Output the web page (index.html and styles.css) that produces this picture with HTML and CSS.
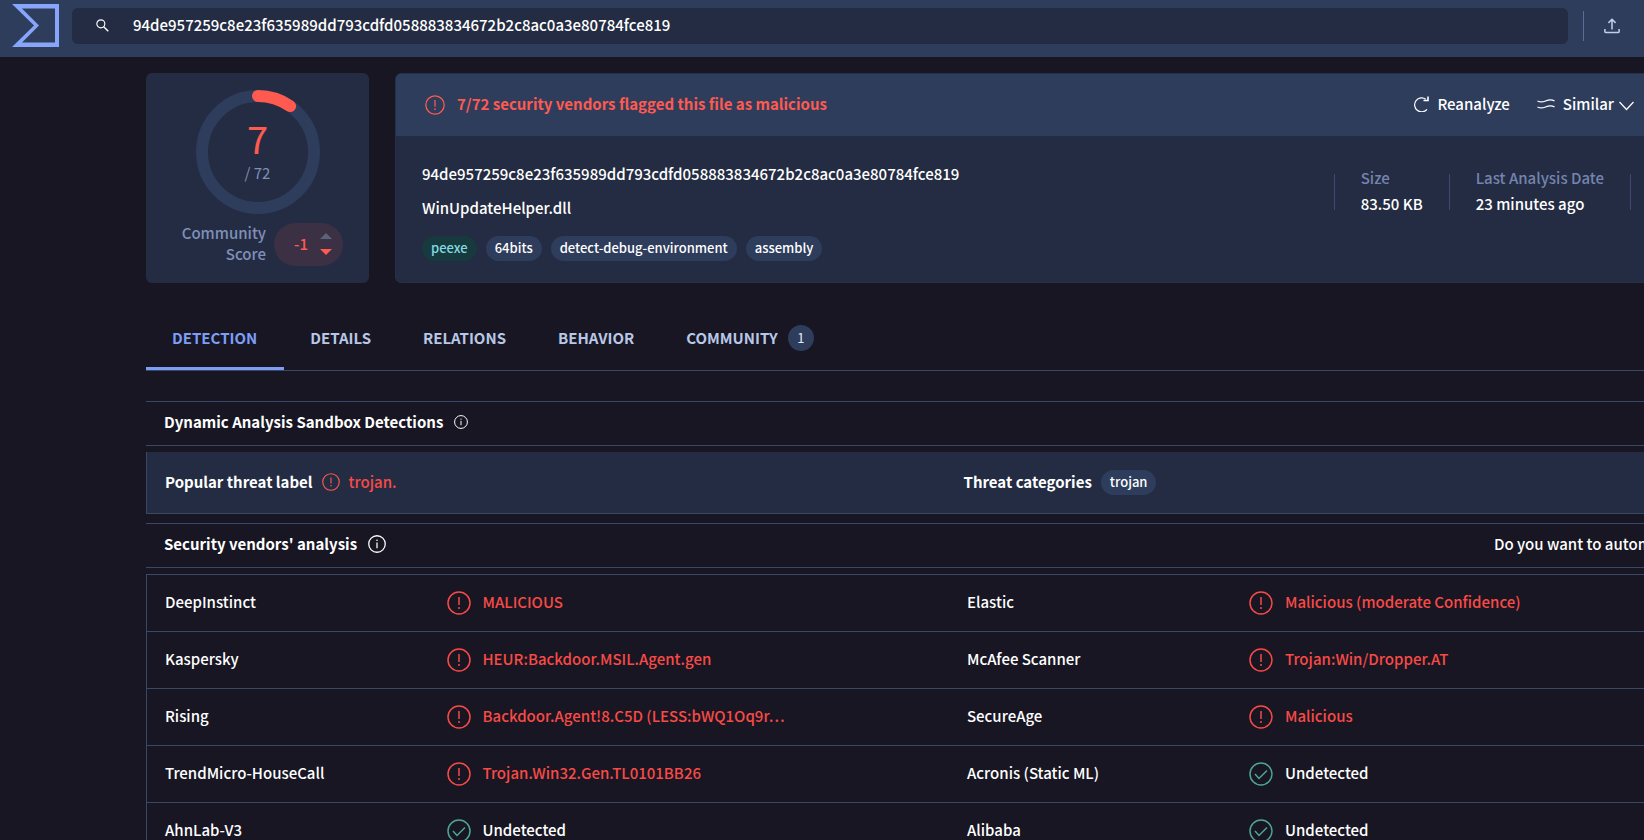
FILE: index.html
```
<!DOCTYPE html>
<html lang="en">
<head>
	<meta charset="utf-8">
	<title>WinUpdateHelper.dll</title>
	<link rel="stylesheet" href="styles.css">
</head>
<body>
	<!-- Shared icons -->
	<svg class="sprite" aria-hidden="true">
		<symbol id="alert" viewBox="0 0 24 24">
			<circle cx="12" cy="12" r="11" fill="none" stroke="currentColor" stroke-width="1.5"/>
			<path d="M12 6v8" fill="none" stroke="currentColor" stroke-width="1.5"/>
			<circle cx="12" cy="17" r="1" fill="currentColor"/>
		</symbol>
		<symbol id="check" viewBox="0 0 24 24">
			<circle cx="12" cy="12" r="11" fill="none" stroke="currentColor" stroke-width="1.5"/>
			<path d="M6 12l4 4.500 8-8" fill="none" stroke="currentColor" stroke-width="1.5"/>
		</symbol>
		<symbol id="info" viewBox="0 0 24 24">
			<circle cx="12" cy="12" r="11" fill="none" stroke="currentColor" stroke-width="1.700"/>
			<path d="M12 10v7.500" fill="none" stroke="currentColor" stroke-width="1.700"/>
			<circle cx="12" cy="7" r="1.100" fill="currentColor"/>
		</symbol>
	</svg>

	<header class="topbar">
		<a class="logo" href="#" aria-label="Home">
			<svg viewBox="0 0 47 43"><path d="M0 0h47v43H0l22-21.500zM10 4.500l17 17-17 17h33v-34z" fill="currentColor" fill-rule="evenodd"/></svg>
		</a>
		<form class="search">
			<svg class="search-icon" viewBox="0 0 14 14" fill="none" stroke="currentColor"><circle cx="5.200" cy="5.200" r="4.300" stroke-width="1.200"/><path d="M8.300 8.300l4.900 4.900" stroke-width="1.500"/></svg>
			<input type="text" aria-label="Search" value="94de957259c8e23f635989dd793cdfd058883834672b2c8ac0a3e80784fce819">
		</form>
		<button class="upload" type="button" aria-label="Upload">
			<svg viewBox="0 0 18 18" fill="none" stroke="currentColor" stroke-width="1.700"><path d="M9 13V2M5 5.500l4-4 4 4M1 12.500V15.500q0 .8.8.8h14.400q.8 0 .8-.8v-3"/></svg>
		</button>
	</header>

	<main class="page">
		<div class="summary">
			<section class="score">
				<div class="ring">
					<svg class="ring-svg" viewBox="0 0 124 124" fill="none" stroke-width="12">
						<circle class="ring-track" cx="62" cy="62" r="56"/>
						<path class="ring-value" d="M62 6A56 56 0 0 1 94.100 16.100"/>
					</svg>
					<span class="ring-count">7</span>
					<span class="ring-total">/ 72</span>
				</div>
				<div class="community">
					<span class="community-label">Community<br>Score</span>
					<div class="votes">
						<span>-1</span>
						<div class="vote-arrows">
							<button class="vote-up" type="button" aria-label="Vote up"></button>
							<button class="vote-down" type="button" aria-label="Vote down"></button>
						</div>
					</div>
				</div>
			</section>

			<section class="file">
				<div class="file-head">
					<svg class="icon-m"><use href="#alert"/></svg>
					<strong class="verdict">7/72 security vendors flagged this file as malicious</strong>
					<div class="actions">
						<button type="button">
							<svg width="16" height="16" viewBox="0 0 16 16" fill="none" stroke="currentColor" stroke-width="1.200"><path d="M14 13.300A7 7 0 1 1 12.800 3.200"/><path d="M10.500 4.500H15V.5" stroke-width="1.600"/></svg>
							Reanalyze
						</button>
						<button type="button">
							<svg width="18" height="12" viewBox="0 0 18 12" fill="none" stroke="currentColor" stroke-width="1.300"><path d="M.5 3c2.500 1.300 5 1.300 8 0s6-2 9 0M.5 9c2.500 1.300 5 1.300 8 0s6-2 9 0"/></svg>
							Similar
							<svg class="chevron" viewBox="0 0 15 10" fill="none" stroke="currentColor" stroke-width="1.200"><path d="M.5 1l7 7.500 7-7.500"/></svg>
						</button>
					</div>
				</div>
				<div class="file-body">
					<div class="file-names">
						<div class="file-name">94de957259c8e23f635989dd793cdfd058883834672b2c8ac0a3e80784fce819</div>
						<div class="file-name">WinUpdateHelper.dll</div>
						<div class="chips">
							<a class="chip chip-green" href="#">peexe</a>
							<a class="chip" href="#">64bits</a>
							<a class="chip" href="#">detect-debug-environment</a>
							<a class="chip" href="#">assembly</a>
						</div>
					</div>
					<dl class="facts">
						<div class="fact">
							<dt>Size</dt>
							<dd>83.50 KB</dd>
						</div>
						<div class="fact">
							<dt>Last Analysis Date</dt>
							<dd>23 minutes ago</dd>
						</div>
					</dl>
				</div>
			</section>
		</div>

		<nav class="tabs">
			<a class="tab active" href="#">DETECTION</a>
			<a class="tab" href="#">DETAILS</a>
			<a class="tab" href="#">RELATIONS</a>
			<a class="tab" href="#">BEHAVIOR</a>
			<a class="tab" href="#">COMMUNITY <span class="count">1</span></a>
		</nav>

		<h2 class="bar">Dynamic Analysis Sandbox Detections <svg class="icon-xs"><use href="#info"/></svg></h2>

		<div class="threat">
			<div class="threat-cell">
				<strong>Popular threat label</strong>
				<svg class="icon-s"><use href="#alert"/></svg>
				<span class="malicious">trojan.</span>
			</div>
			<div class="threat-cell">
				<strong>Threat categories</strong>
				<a class="chip" href="#">trojan</a>
			</div>
		</div>

		<h2 class="bar">
			Security vendors' analysis <svg class="icon-s"><use href="#info"/></svg>
			<a class="automate" href="#">Do you want to automate checks?</a>
		</h2>

		<table class="vendors">
			<tr>
				<td class="vendor">DeepInstinct</td>
				<td class="malicious"><svg class="icon-l"><use href="#alert"/></svg>MALICIOUS</td>
				<td class="vendor">Elastic</td>
				<td class="malicious"><svg class="icon-l"><use href="#alert"/></svg>Malicious (moderate Confidence)</td>
			</tr>
			<tr>
				<td class="vendor">Kaspersky</td>
				<td class="malicious"><svg class="icon-l"><use href="#alert"/></svg>HEUR:Backdoor.MSIL.Agent.gen</td>
				<td class="vendor">McAfee Scanner</td>
				<td class="malicious"><svg class="icon-l"><use href="#alert"/></svg>Trojan:Win/Dropper.AT</td>
			</tr>
			<tr>
				<td class="vendor">Rising</td>
				<td class="malicious"><svg class="icon-l"><use href="#alert"/></svg>Backdoor.Agent!8.C5D (LESS:bWQ1Oq9r…</td>
				<td class="vendor">SecureAge</td>
				<td class="malicious"><svg class="icon-l"><use href="#alert"/></svg>Malicious</td>
			</tr>
			<tr>
				<td class="vendor">TrendMicro-HouseCall</td>
				<td class="malicious"><svg class="icon-l"><use href="#alert"/></svg>Trojan.Win32.Gen.TL0101BB26</td>
				<td class="vendor">Acronis (Static ML)</td>
				<td class="clean"><svg class="icon-l"><use href="#check"/></svg>Undetected</td>
			</tr>
			<tr>
				<td class="vendor">AhnLab-V3</td>
				<td class="clean"><svg class="icon-l"><use href="#check"/></svg>Undetected</td>
				<td class="vendor">Alibaba</td>
				<td class="clean"><svg class="icon-l"><use href="#check"/></svg>Undetected</td>
			</tr>
		</table>
	</main>
</body>
</html>
```
FILE: styles.css
```
* {
	box-sizing: border-box;
}

body {
	margin: 0;
	height: 100vh;
	overflow: hidden;
	background: #171622;
	color: #fff;
	font-family: "Noto Sans CJK SC", "Noto Sans", sans-serif;
	font-size: 15px;
	font-weight: 500;
	line-height: 20px;
}

a {
	color: inherit;
	text-decoration: none;
}

button,
input {
	margin: 0;
	padding: 0;
	border: 0;
	background: none;
	color: inherit;
	font: inherit;
}

svg {
	flex: none;
}

strong {
	font-weight: 700;
}

.sprite {
	display: none;
}

.icon-xs { width: 14px; height: 14px; }
.icon-s { width: 18px; height: 18px; }
.icon-m { width: 20px; height: 20px; }
.icon-l { width: 24px; height: 24px; }

/* Top bar */

.topbar {
	display: flex;
	align-items: center;
	height: 57px;
	padding: 0 24px 6px 12px;
	background: #2e3d5c;
}

.logo {
	color: #87a6fb;
}

.logo svg {
	display: block;
	width: 47px;
	height: 43px;
}

.search {
	flex: 1;
	display: flex;
	align-items: center;
	gap: 24px;
	height: 36px;
	margin: 0 15px 0 13px;
	padding-left: 24px;
	border-radius: 6px;
	background: #242c43;
}

.search-icon {
	width: 13px;
	height: 13px;
}

.search input {
	flex: 1;
	height: 36px;
	padding-bottom: 2px;
	outline: 0;
}

.upload {
	display: flex;
	align-items: center;
	height: 30px;
	padding-left: 20px;
	border-left: 1px solid #5c6c96;
	color: #c3cfe8;
}

.upload svg {
	width: 16px;
	height: 18px;
}

/* The content runs past the right edge of the window */
.page {
	margin: 16px -108px 0 146px;
}

.summary {
	display: flex;
	gap: 26px;
	height: 210px;
}

/* Score card */

.score {
	width: 223px;
	padding-top: 17px;
	border-radius: 6px;
	background: #242c43;
}

.ring {
	position: relative;
	width: 124px;
	height: 124px;
	margin: 0 auto;
	padding-top: 23px;
	text-align: center;
}

.ring-svg {
	position: absolute;
	inset: 0;
}

.ring-track {
	stroke: #2e3d5c;
}

.ring-value {
	stroke: #ff5a50;
	stroke-linecap: round;
}

.ring-count,
.ring-total {
	display: block;
	position: relative;
	font-weight: 400;
}

.ring-count {
	color: #ff5a50;
	font-size: 38px;
	line-height: 50px;
}

.ring-total {
	color: #8090b8;
}

.community {
	display: flex;
	justify-content: flex-end;
	align-items: center;
	gap: 8px;
	margin-top: 8px;
	padding-right: 26px;
}

.community-label {
	padding-bottom: 2px;
	color: #8090b8;
	line-height: 21px;
	text-align: right;
}

.votes {
	display: flex;
	align-items: center;
	justify-content: flex-end;
	gap: 12px;
	width: 69px;
	height: 43px;
	padding-right: 11px;
	border-radius: 22px;
	background: #3b3044;
	color: #ff5a50;
}

.vote-arrows {
	display: flex;
	flex-direction: column;
	gap: 10px;
}

.vote-up,
.vote-down {
	width: 12px;
	height: 6px;
	background: #5a6378;
	clip-path: polygon(50% 0, 100% 100%, 0 100%);
}

.vote-down {
	background: #ff5a50;
	clip-path: polygon(0 0, 100% 0, 50% 100%);
}

/* File card */

.file {
	flex: 1;
	border: 1px solid #263049;
	border-radius: 6px;
	background: #242c43;
	overflow: hidden;
}

.file-head {
	display: flex;
	align-items: center;
	height: 62px;
	padding: 0 117px 0 29px;
	background: #2e3d5c;
	color: #ff5a50;
}

.verdict {
	margin-left: 12px;
	padding-bottom: 2px;
}

.actions {
	display: flex;
	gap: 27px;
	margin-left: auto;
	padding-bottom: 2px;
	color: #fff;
}

.actions button {
	display: flex;
	align-items: center;
	gap: 8px;
}

.chevron {
	width: 15px;
	height: 10px;
	margin: 3px 0 0 -3px;
}

.file-body {
	display: flex;
	align-items: flex-start;
	justify-content: space-between;
	padding: 28px 120px 0 26px;
}

.file-name {
	margin-bottom: 14px;
}

.chips {
	display: flex;
	gap: 9px;
	margin-top: 18px;
}

.chip {
	height: 25px;
	padding: 0 9px;
	border-radius: 13px;
	background: #2e3d5c;
	font-size: 13px;
	line-height: 24px;
}

.chip-green {
	background: #163a3d;
	color: #84d8e0;
}

.facts {
	display: flex;
	margin: 10px 0 0;
	height: 36px;
	border-right: 1px solid #3c4a70;
}

.fact {
	display: flex;
	flex-direction: column;
	justify-content: center;
	gap: 6px;
	padding: 0 26px 2px;
	border-left: 1px solid #3c4a70;
}

.fact dt {
	color: #7484ae;
}

.fact dd {
	margin: 0;
}

/* Tabs */

.tabs {
	display: flex;
	height: 63px;
	margin-top: 25px;
	border-bottom: 1px solid #3a4868;
}

.tab {
	display: flex;
	align-items: center;
	gap: 10px;
	padding: 0 26px;
	border-bottom: 3px solid transparent;
	color: #b9c7e6;
	font-weight: 700;
}

.tab.active {
	padding-right: 27px;
	border-color: #7e9ef5;
	color: #7e9ef5;
}

.count {
	width: 26px;
	border-radius: 13px;
	background: #2e3d5c;
	color: #e4eaf7;
	font-size: 13px;
	font-weight: 400;
	line-height: 26px;
	text-align: center;
}

/* Section bars */

.bar {
	display: flex;
	align-items: center;
	gap: 11px;
	height: 45px;
	margin: 30px 0 6px;
	padding: 0 18px 3px;
	border: solid #3a4868;
	border-width: 1px 0;
	font-size: 15px;
	font-weight: 700;
}

.automate {
	margin-left: auto;
	font-weight: 500;
}

.threat {
	display: grid;
	grid-template-columns: 1fr 1fr;
	height: 62px;
	padding: 0 8px 1px 0;
	border: solid #3a4868;
	border-width: 0 0 1px 1px;
	background: #242c43;
}

.threat-cell {
	display: flex;
	align-items: center;
	gap: 9px;
	padding-left: 18px;
}

.threat .icon-s {
	color: #ff5a50;
}

.threat + .bar {
	margin-top: 9px;
}

.malicious {
	color: #f84a46;
}

/* Vendor results */

.vendors {
	width: 100%;
	border: 1px solid #3a4868;
	border-collapse: collapse;
	table-layout: fixed;
}

.vendors tr {
	height: 57px;
	border-bottom: 1px solid #3a4868;
}

.vendors td {
	padding: 0 0 2px;
	white-space: nowrap;
}

.vendors .vendor {
	width: 300px;
	padding-left: 18px;
}

/* Negative margins keep the icon from stretching the line box */
.vendors svg {
	margin: -6px 12px -6px 0;
	vertical-align: -1px;
}

.clean svg {
	color: #4fa594;
}
```
